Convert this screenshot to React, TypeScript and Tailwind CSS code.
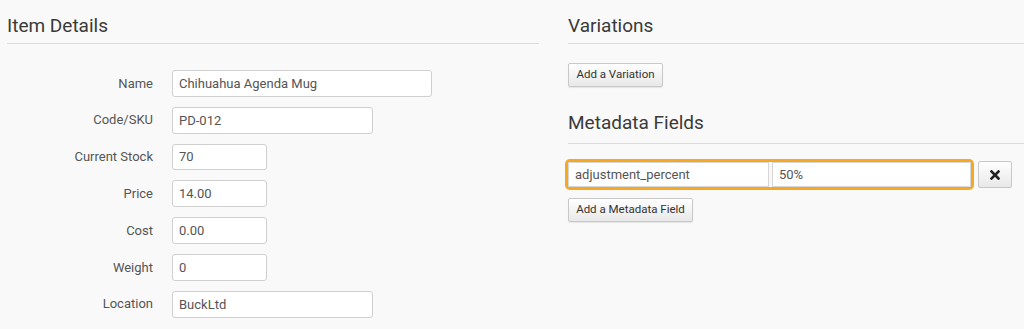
import React from "react";

const fields = [
    { label: "Name", value: "Chihuahua Agenda Mug", width: "w-[260px]" },
    { label: "Code/SKU", value: "PD-012", width: "w-[201px]" },
    { label: "Current Stock", value: "70", width: "w-[95px]" },
    { label: "Price", value: "14.00", width: "w-[95px]" },
    { label: "Cost", value: "0.00", width: "w-[95px]" },
    { label: "Weight", value: "0", width: "w-[95px]" },
    { label: "Location", value: "BuckLtd", width: "w-[201px]" },
];

const Heading = ({ children, className = "" }: { children: React.ReactNode; className?: string }) => (
    <div className={`pt-[15px] border-b border-[#dcdcdc] ${className}`}>
        <h2 className="text-[19px] leading-[22px] text-[#3a3a3a] font-normal">{children}</h2>
    </div>
);

const Button = ({ children, className = "" }: { children: React.ReactNode; className?: string }) => (
    <button className={`h-[24px] px-0 flex items-center justify-center whitespace-nowrap text-[11.5px] text-[#333] border border-[#c8c8c8] rounded-[2px] bg-gradient-to-b from-white to-[#e8e8e8] shadow-[0_1px_1px_rgba(0,0,0,0.08)] ${className}`}>
        {children}
    </button>
);

const App = () => {
    return (
        <div className="w-[1024px] h-[329px] overflow-hidden bg-[#f9f9f9] flex pl-[7px]" style={{ fontFamily: "Roboto, 'Liberation Sans', sans-serif" }}>
            <div className="w-[532px] shrink-0">
                <Heading className="pb-[6px]">Item Details</Heading>
                <div className="mt-[26px] flex flex-col gap-[10px]">
                    {fields.map((f) => (
                        <div key={f.label} className="flex items-center">
                            <label className="w-[146px] text-right text-[13px] text-[#555]">{f.label}</label>
                            <input
                                readOnly
                                value={f.value}
                                className={`ml-[19px] h-[26.8px] ${f.width} px-[6px] text-[13px] text-[#555] bg-white border border-[#cfcfcf] rounded-[3px] outline-none`}
                            />
                        </div>
                    ))}
                </div>
            </div>

            <div className="flex-1 ml-[29px]">
                <Heading className="pb-[6px]">Variations</Heading>
                <Button className="mt-[19px] w-[95px]">Add a Variation</Button>

                <Heading className="mt-[10px] pb-[9px]">Metadata Fields</Heading>
                <div className="mt-[17px] flex items-center">
                    <div className="w-[403px] h-[25px] flex gap-[3px] bg-[#f9f9f9] rounded-[2px] ring-[3px] ring-[#f7a823]">
                        <input
                            readOnly
                            value="adjustment_percent"
                            className="w-[201px] h-full px-[6px] text-[13px] text-[#555] bg-white border border-[#d6d6d6] outline-none"
                        />
                        <input
                            readOnly
                            value="50%"
                            className="flex-1 h-full px-[6px] text-[13px] text-[#555] bg-white border border-[#d6d6d6] outline-none"
                        />
                    </div>
                    <button className="ml-[7px] w-[34px] h-[27px] flex items-center justify-center border border-[#c8c8c8] rounded-[2px] bg-gradient-to-b from-white to-[#e8e8e8]">
                        <svg width="10" height="10" viewBox="0 0 10 10">
                            <path d="M1.5 1.5 L8.5 8.5 M8.5 1.5 L1.5 8.5" stroke="#222" strokeWidth="2.6" strokeLinecap="square" />
                        </svg>
                    </button>
                </div>
                <Button className="mt-[10px] w-[125px]">Add a Metadata Field</Button>
            </div>
        </div>
    );
};

export default App;
